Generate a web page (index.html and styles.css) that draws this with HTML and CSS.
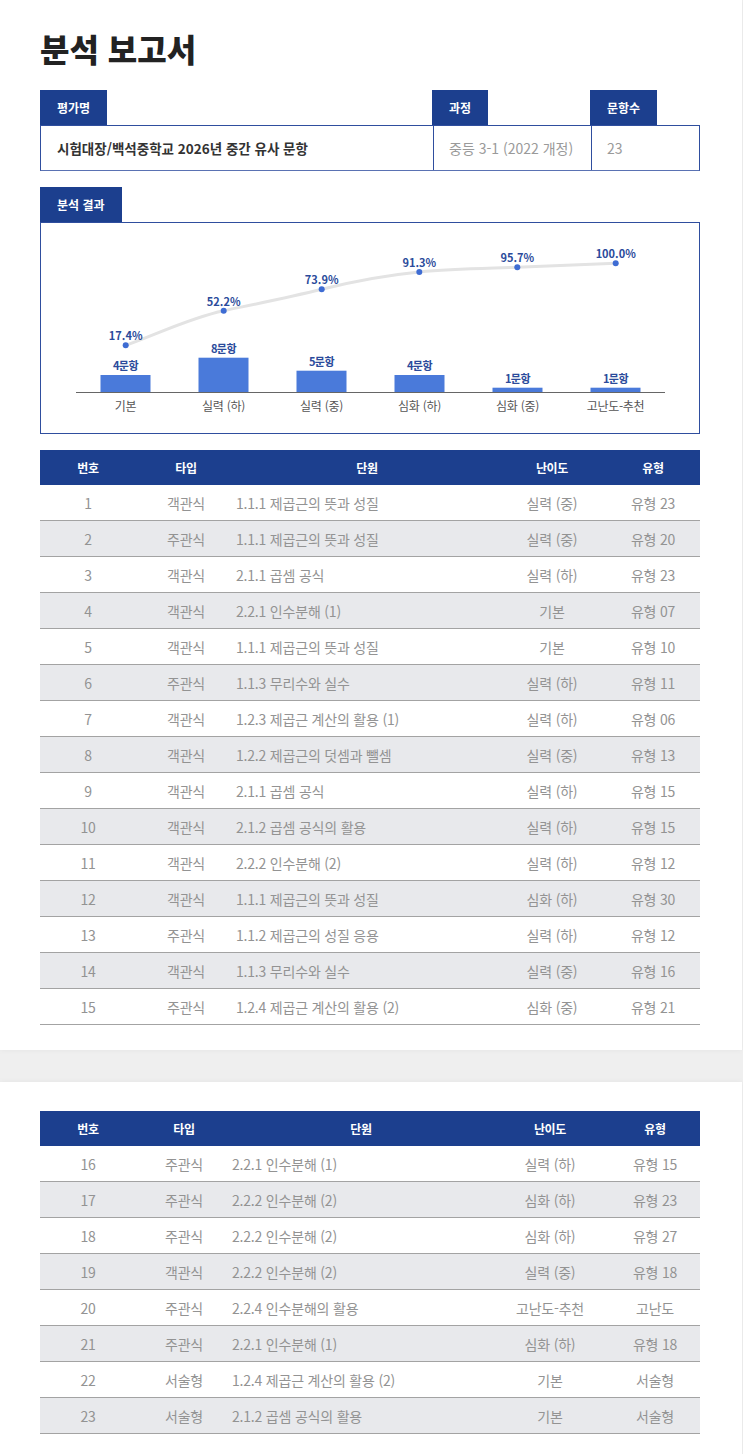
FILE: index.html
```html
<!DOCTYPE html>
<html lang="ko">
<head>
<meta charset="utf-8">
<title>분석 보고서</title>
<link rel="stylesheet" href="styles.css">
</head>
<body>
<div class="sheet sheet-first">
  <h1 class="title">분석 보고서</h1>

  <section class="info">
    <div class="info-row info-tabs">
      <div class="info-col"><span class="tab">평가명</span></div>
      <div class="info-col"><span class="tab">과정</span></div>
      <div class="info-col"><span class="tab">문항수</span></div>
    </div>
    <div class="info-row info-box">
      <div class="info-cell info-name">시험대장/백석중학교 2026년 중간 유사 문항</div>
      <div class="info-cell info-sub">중등 3-1 (2022 개정)</div>
      <div class="info-cell info-sub">23</div>
    </div>
  </section>

  <section class="result">
    <div class="result-tabs"><span class="tab">분석 결과</span></div>
    <div class="chart-box">
      <svg class="chart" width="659" height="210" viewBox="0 0 659 210" xmlns="http://www.w3.org/2000/svg">
        <g transform="translate(-41,-223)">
          <line x1="76" y1="392.5" x2="665" y2="392.5" class="axis"/>
          <rect x="100.5" y="375" width="50" height="17" class="bar"/>
          <rect x="198.5" y="357.7" width="50" height="34.3" class="bar"/>
          <rect x="296.5" y="370.7" width="50" height="21.3" class="bar"/>
          <rect x="394.5" y="375" width="50" height="17" class="bar"/>
          <rect x="492.5" y="387.7" width="50" height="4.3" class="bar"/>
          <rect x="590.5" y="387.7" width="50" height="4.3" class="bar"/>

          <text x="125.5" y="370" class="bar-label">4문항</text>
          <text x="223.5" y="352.7" class="bar-label">8문항</text>
          <text x="321.5" y="365.7" class="bar-label">5문항</text>
          <text x="419.5" y="370" class="bar-label">4문항</text>
          <text x="517.5" y="382.7" class="bar-label">1문항</text>
          <text x="615.5" y="382.7" class="bar-label">1문항</text>

          <path class="trend" d="M125.7 345.3 C158.4 333.6 191 317.5 223.7 310.7 C256.4 303.9 289 297.5 321.7 289.3 C354.4 281.1 386.6 275.2 419.3 272 C452 268.8 484.6 268.5 517.3 267.3 C550 266.1 583 264.5 615.7 263.3"/>
          <circle cx="125.7" cy="345.3" r="3" class="dot"/>
          <circle cx="223.7" cy="310.7" r="3" class="dot"/>
          <circle cx="321.7" cy="289.3" r="3" class="dot"/>
          <circle cx="419.3" cy="272" r="3" class="dot"/>
          <circle cx="517.3" cy="267.3" r="3" class="dot"/>
          <circle cx="615.7" cy="263.3" r="3" class="dot"/>

          <text x="125.7" y="340" class="pct-label">17.4%</text>
          <text x="223.7" y="305.7" class="pct-label">52.2%</text>
          <text x="321.7" y="284.3" class="pct-label">73.9%</text>
          <text x="419.3" y="267" class="pct-label">91.3%</text>
          <text x="517.3" y="262.3" class="pct-label">95.7%</text>
          <text x="615.7" y="258.3" class="pct-label">100.0%</text>

          <text x="125.5" y="411" class="cat-label">기본</text>
          <text x="223.5" y="411" class="cat-label">실력 (하)</text>
          <text x="321.5" y="411" class="cat-label">실력 (중)</text>
          <text x="419.5" y="411" class="cat-label">심화 (하)</text>
          <text x="517.5" y="411" class="cat-label">심화 (중)</text>
          <text x="615.5" y="411" class="cat-label">고난도-추천</text>
        </g>
      </svg>
    </div>
  </section>

  <table class="qtable qtable-a">
    <colgroup>
      <col class="c-no"><col class="c-type"><col class="c-unit"><col class="c-level"><col class="c-kind">
    </colgroup>
    <thead>
      <tr><th>번호</th><th>타입</th><th>단원</th><th>난이도</th><th>유형</th></tr>
    </thead>
    <tbody>
      <tr><td>1</td><td>객관식</td><td class="unit">1.1.1 제곱근의 뜻과 성질</td><td>실력 (중)</td><td>유형 23</td></tr>
      <tr><td>2</td><td>주관식</td><td class="unit">1.1.1 제곱근의 뜻과 성질</td><td>실력 (중)</td><td>유형 20</td></tr>
      <tr><td>3</td><td>객관식</td><td class="unit">2.1.1 곱셈 공식</td><td>실력 (하)</td><td>유형 23</td></tr>
      <tr><td>4</td><td>객관식</td><td class="unit">2.2.1 인수분해 (1)</td><td>기본</td><td>유형 07</td></tr>
      <tr><td>5</td><td>객관식</td><td class="unit">1.1.1 제곱근의 뜻과 성질</td><td>기본</td><td>유형 10</td></tr>
      <tr><td>6</td><td>주관식</td><td class="unit">1.1.3 무리수와 실수</td><td>실력 (하)</td><td>유형 11</td></tr>
      <tr><td>7</td><td>객관식</td><td class="unit">1.2.3 제곱근 계산의 활용 (1)</td><td>실력 (하)</td><td>유형 06</td></tr>
      <tr><td>8</td><td>객관식</td><td class="unit">1.2.2 제곱근의 덧셈과 뺄셈</td><td>실력 (중)</td><td>유형 13</td></tr>
      <tr><td>9</td><td>객관식</td><td class="unit">2.1.1 곱셈 공식</td><td>실력 (하)</td><td>유형 15</td></tr>
      <tr><td>10</td><td>객관식</td><td class="unit">2.1.2 곱셈 공식의 활용</td><td>실력 (하)</td><td>유형 15</td></tr>
      <tr><td>11</td><td>객관식</td><td class="unit">2.2.2 인수분해 (2)</td><td>실력 (하)</td><td>유형 12</td></tr>
      <tr><td>12</td><td>객관식</td><td class="unit">1.1.1 제곱근의 뜻과 성질</td><td>심화 (하)</td><td>유형 30</td></tr>
      <tr><td>13</td><td>주관식</td><td class="unit">1.1.2 제곱근의 성질 응용</td><td>실력 (하)</td><td>유형 12</td></tr>
      <tr><td>14</td><td>객관식</td><td class="unit">1.1.3 무리수와 실수</td><td>실력 (중)</td><td>유형 16</td></tr>
      <tr><td>15</td><td>주관식</td><td class="unit">1.2.4 제곱근 계산의 활용 (2)</td><td>심화 (중)</td><td>유형 21</td></tr>
    </tbody>
  </table>
</div>

<div class="sheet sheet-second">
  <table class="qtable qtable-b">
    <colgroup>
      <col class="c-no"><col class="c-type"><col class="c-unit"><col class="c-level"><col class="c-kind">
    </colgroup>
    <thead>
      <tr><th>번호</th><th>타입</th><th>단원</th><th>난이도</th><th>유형</th></tr>
    </thead>
    <tbody>
      <tr><td>16</td><td>주관식</td><td class="unit">2.2.1 인수분해 (1)</td><td>실력 (하)</td><td>유형 15</td></tr>
      <tr><td>17</td><td>주관식</td><td class="unit">2.2.2 인수분해 (2)</td><td>심화 (하)</td><td>유형 23</td></tr>
      <tr><td>18</td><td>주관식</td><td class="unit">2.2.2 인수분해 (2)</td><td>심화 (하)</td><td>유형 27</td></tr>
      <tr><td>19</td><td>객관식</td><td class="unit">2.2.2 인수분해 (2)</td><td>실력 (중)</td><td>유형 18</td></tr>
      <tr><td>20</td><td>주관식</td><td class="unit">2.2.4 인수분해의 활용</td><td>고난도-추천</td><td>고난도</td></tr>
      <tr><td>21</td><td>주관식</td><td class="unit">2.2.1 인수분해 (1)</td><td>심화 (하)</td><td>유형 18</td></tr>
      <tr><td>22</td><td>서술형</td><td class="unit">1.2.4 제곱근 계산의 활용 (2)</td><td>기본</td><td>서술형</td></tr>
      <tr><td>23</td><td>서술형</td><td class="unit">2.1.2 곱셈 공식의 활용</td><td>기본</td><td>서술형</td></tr>
    </tbody>
  </table>
</div>
</body>
</html>
```

FILE: styles.css
```css
html, body {
  margin: 0;
  padding: 0;
}

body {
  background: #efefef;
  font-family: "Noto Sans CJK KR", "Noto Sans", sans-serif;
  color: #333;
}

.sheet {
  width: 742px;
  box-sizing: border-box;
  background: #fff;
  padding: 0 42px 0 40px;
  box-shadow: 0 0 6px rgba(0, 0, 0, 0.05);
}

.sheet-first {
  padding-top: 28px;
  padding-bottom: 25px;
}

.sheet-second {
  margin-top: 32px;
  padding-top: 29px;
  padding-bottom: 40px;
}

.title {
  margin: 0 0 22px 0;
  font-size: 32px;
  line-height: 40px;
  font-weight: 900;
  letter-spacing: 0;
  color: #222;
}

.tab {
  display: inline-block;
  height: 35px;
  line-height: 35px;
  padding: 0 17px;
  background: #1c3f8e;
  color: #fff;
  font-size: 12px;
  font-weight: 700;
  letter-spacing: 0;
}

.info-row {
  display: grid;
  grid-template-columns: 392px 158px 110px;
}

.info-tabs {
  height: 35px;
}

.info-box {
  height: 46px;
  box-sizing: border-box;
  border: 1px solid #2f4e9e;
  border-bottom-color: #5a72b3;
}

.info-cell {
  display: flex;
  align-items: center;
  padding-left: 16px;
  font-size: 14px;
  letter-spacing: 0;
}

.info-cell + .info-cell {
  border-left: 1px solid #2f4e9e;
  padding-left: 15px;
}

.info-name {
  font-weight: 700;
  font-size: 13.5px;
  color: #333;
}

.info-sub {
  color: #9a9a9a;
}

.result {
  margin-top: 16px;
}

.result-tabs {
  height: 35px;
}

.chart-box {
  height: 212px;
  box-sizing: border-box;
  border: 1px solid #2f4e9e;
}

.chart {
  display: block;
}

.axis {
  stroke: #666;
  stroke-width: 1;
}

.bar {
  fill: #4a7ada;
}

.trend {
  fill: none;
  stroke: #e3e3e3;
  stroke-width: 3;
}

.dot {
  fill: #3e6cd3;
}

.bar-label,
.pct-label,
.cat-label {
  font-family: "Noto Sans CJK KR", "Noto Sans", sans-serif;
  text-anchor: middle;
}

.bar-label {
  font-size: 11px;
  font-weight: 700;
  fill: #2b4b9b;
  letter-spacing: -0.5px;
}

.pct-label {
  font-size: 11px;
  font-weight: 700;
  fill: #2b4b9b;
  letter-spacing: 0;
}

.cat-label {
  font-size: 12px;
  fill: #555;
  letter-spacing: -0.3px;
}

.qtable {
  width: 660px;
  border-collapse: collapse;
  table-layout: fixed;
  margin-top: 16px;
}

.sheet-second .qtable {
  margin-top: 0;
}

.qtable-a .c-no { width: 96px; }
.qtable-a .c-type { width: 100px; }
.qtable-a .c-unit { width: 262px; }
.qtable-a .c-level { width: 108px; }
.qtable-a .c-kind { width: 94px; }

.qtable-b .c-no { width: 96px; }
.qtable-b .c-type { width: 96px; }
.qtable-b .c-unit { width: 258px; }
.qtable-b .c-level { width: 120px; }
.qtable-b .c-kind { width: 90px; }

.qtable th {
  height: 35px;
  padding: 0;
  background: #1c3f8e;
  color: #fff;
  font-size: 12px;
  font-weight: 700;
  letter-spacing: -0.3px;
  text-align: center;
}

.qtable td {
  height: 35px;
  padding: 0;
  border-bottom: 1px solid #a3a3a3;
  text-align: center;
  font-size: 14px;
  color: #939393;
  letter-spacing: -0.2px;
  white-space: nowrap;
}

.qtable td.unit {
  text-align: left;
}

.qtable tbody tr:nth-child(even) td {
  background: #e8e9ec;
}
```
